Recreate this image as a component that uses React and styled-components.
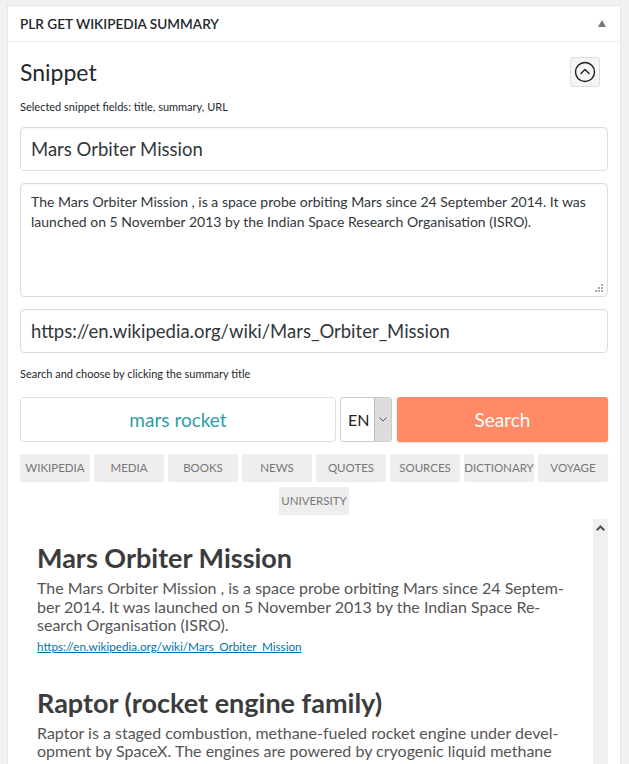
import React from "react";
import styled, { createGlobalStyle } from "styled-components";

const Global = createGlobalStyle`
  html, body { margin: 0; padding: 0; background: #f1f1f1; }
  body { font-family: Lato, "Open Sans", sans-serif; color: #23282d; overflow: hidden; }
  * { box-sizing: border-box; }
`;

const Panel = styled.div`
  margin: 5px 8px 0 7px;
  background: #fff;
  border: 1px solid #e5e5e5;
  box-shadow: 0 1px 1px rgba(0,0,0,.04);
  height: 800px;
`;

const Header = styled.div`
  height: 36px;
  display: flex;
  align-items: center;
  justify-content: space-between;
  padding: 0 14px 0 12px;
  border-bottom: 1px solid #eee;
`;

const HeaderTitle = styled.h2`
  margin: 0;
  font-size: 13.6px;
  font-weight: 600;
  color: #23282d;
`;

const Toggle = styled.span`
  width: 0; height: 0;
  border-left: 4.5px solid transparent;
  border-right: 4.5px solid transparent;
  border-bottom: 7px solid #72777c;
`;

const Body = styled.div`
  padding: 0 12px;
  display: flex;
  flex-direction: column;
`;

const TitleRow = styled.div`
  margin-top: 15px;
  height: 30px;
  display: flex;
  align-items: center;
  justify-content: space-between;
  padding-right: 8px;
`;

const Heading = styled.h3`
  margin: 0;
  font-size: 23px;
  font-weight: 400;
  color: #23282d;
`;

const IconButton = styled.button`
  width: 30px; height: 30px;
  padding: 0;
  display: flex; align-items: center; justify-content: center;
  background: #f3f5f6;
  border: 1px solid #ddd;
  border-radius: 3px;
`;

const Hint = styled.p`
  margin: ${p => p.$mt}px 0 0;
  font-size: 11px;
  line-height: 15px;
  color: #23282d;
`;

const Field = styled.div`
  margin-top: ${p => p.$mt}px;
  height: ${p => p.$h}px;
  border: 1px solid #ddd;
  border-radius: 4px;
  box-shadow: inset 0 1px 2px rgba(0,0,0,.04);
  display: flex;
  align-items: ${p => (p.$area ? "flex-start" : "center")};
  padding: ${p => (p.$area ? "8px 10px" : "0 10px")};
  font-size: ${p => (p.$area ? 14 : 18.5)}px;
  line-height: ${p => (p.$area ? 20 : 24)}px;
  color: #32373c;
  position: relative;
`;

const Grip = styled.svg`
  position: absolute;
  right: 3px;
  bottom: 3px;
`;

const SearchRow = styled.div`
  margin-top: 16px;
  height: 45px;
  display: flex;
  gap: 4px;
`;

const QueryBox = styled.div`
  width: 316px;
  border: 1px solid #ddd;
  border-radius: 4px;
  display: flex;
  align-items: center;
  justify-content: center;
  font-size: 19px;
  color: #2f9ea8;
`;

const Select = styled.div`
  width: 52px;
  border: 1px solid #ccc;
  border-radius: 3px;
  display: flex;
  overflow: hidden;
`;

const SelectValue = styled.span`
  flex: 1;
  display: flex;
  align-items: center;
  padding-left: 7px;
  font-size: 16px;
  color: #222;
`;

const SelectArrow = styled.span`
  width: 17px;
  background: #ddd;
  border-left: 1px solid #bbb;
  display: flex;
  align-items: center;
  justify-content: center;
`;

const SearchButton = styled.button`
  flex: 1;
  margin-left: 1px;
  border: none;
  border-radius: 3px;
  background: #ff8a65;
  color: #fff;
  font-family: inherit;
  font-size: 19px;
  box-shadow: 0 1px 2px rgba(0,0,0,.15);
`;

const Tabs = styled.div`
  margin-top: 12px;
  display: flex;
  flex-wrap: wrap;
  justify-content: center;
  gap: 6px 4px;
`;

const Tab = styled.button`
  width: 70px;
  height: 27px;
  padding: 0;
  border: none;
  border-radius: 2px;
  background: #eee;
  color: #777;
  font-family: inherit;
  font-size: 11.5px;
  text-transform: uppercase;
  box-shadow: 0 1px 1px rgba(0,0,0,.08);
`;

const Results = styled.div`
  margin-top: 5px;
  height: 260px;
  display: flex;
  overflow: hidden;
`;

const ResultList = styled.div`
  flex: 1;
  padding: 23px 20px 0 17px;
`;

const Track = styled.div`
  width: 15px;
  background: #f0f0f0;
  display: flex;
  justify-content: center;
  padding-top: 6px;
`;

const Result = styled.article`
  margin-bottom: 33px;
`;

const ResultTitle = styled.h2`
  margin: 0;
  font-size: 27px;
  line-height: 32px;
  font-weight: 700;
  color: #3c3c3c;
`;

const ResultText = styled.p`
  margin: 5px 0 0;
  font-size: 16px;
  line-height: 18.5px;
  color: #555;
`;

const ResultLink = styled.a`
  display: inline-block;
  margin-top: 3px;
  font-size: 11.7px;
  line-height: 15px;
  color: #0073aa;
  text-decoration: underline;
`;

const tabs = ["Wikipedia", "Media", "Books", "News", "Quotes", "Sources", "Dictionary", "Voyage", "University"];

export default function App() {
  return (
    <>
      <Global />
      <Panel>
        <Header>
          <HeaderTitle>PLR GET WIKIPEDIA SUMMARY</HeaderTitle>
          <Toggle />
        </Header>
        <Body>
          <TitleRow>
            <Heading>Snippet</Heading>
            <IconButton aria-label="collapse">
              <svg width="22" height="22" viewBox="0 0 22 22" fill="none" stroke="#1e1e1e" strokeWidth="1.4">
                <circle cx="11" cy="11" r="9.5" />
                <path d="M7 12.5 L11 8.5 L15 12.5" strokeLinecap="round" strokeLinejoin="round" />
              </svg>
            </IconButton>
          </TitleRow>
          <Hint $mt={12}>Selected snippet fields: title, summary, URL</Hint>
          <Field $mt={13} $h={44}>Mars Orbiter Mission</Field>
          <Field $mt={12} $h={114} $area>
            The Mars Orbiter Mission , is a space probe orbiting Mars since 24 September 2014. It was launched on 5 November 2013 by the Indian Space Research Organisation (ISRO).
            <Grip width="9" height="9" viewBox="0 0 9 9" fill="#aaa">
              <rect x="6" y="0" width="2" height="2" />
              <rect x="3" y="3" width="2" height="2" />
              <rect x="6" y="3" width="2" height="2" />
              <rect x="0" y="6" width="2" height="2" />
              <rect x="3" y="6" width="2" height="2" />
              <rect x="6" y="6" width="2" height="2" />
            </Grip>
          </Field>
          <Field $mt={12} $h={44}>https://en.wikipedia.org/wiki/Mars_Orbiter_Mission</Field>
          <Hint $mt={13}>Search and choose by clicking the summary title</Hint>
          <SearchRow>
            <QueryBox>mars rocket</QueryBox>
            <Select>
              <SelectValue>EN</SelectValue>
              <SelectArrow>
                <svg width="8" height="5" viewBox="0 0 8 5" fill="none" stroke="#555" strokeWidth="1">
                  <path d="M0.5 0.5 L4 4 L7.5 0.5" />
                </svg>
              </SelectArrow>
            </Select>
            <SearchButton>Search</SearchButton>
          </SearchRow>
          <Tabs>
            {tabs.map(t => <Tab key={t}>{t}</Tab>)}
          </Tabs>
          <Results>
            <ResultList>
              <Result>
                <ResultTitle>Mars Orbiter Mission</ResultTitle>
                <ResultText>The Mars Orbiter Mission , is a space probe orbiting Mars since 24 Septem&shy;ber 2014. It was launched on 5 November 2013 by the Indian Space Re&shy;search Organisation (ISRO).</ResultText>
                <ResultLink href="#">https://en.wikipedia.org/wiki/Mars_Orbiter_Mission</ResultLink>
              </Result>
              <Result>
                <ResultTitle>Raptor (rocket engine family)</ResultTitle>
                <ResultText>Raptor is a staged combustion, methane-fueled rocket engine under devel&shy;opment by SpaceX. The engines are powered by cryogenic liquid methane and liquid oxygen rather than the kerosene and liquid oxygen used in earlier engines.</ResultText>
              </Result>
            </ResultList>
            <Track>
              <svg width="9" height="6" viewBox="0 0 9 6" fill="#555">
                <path d="M4.5 0 L9 4.5 L7.5 6 L4.5 3 L1.5 6 L0 4.5 Z" />
              </svg>
            </Track>
          </Results>
        </Body>
      </Panel>
    </>
  );
}
